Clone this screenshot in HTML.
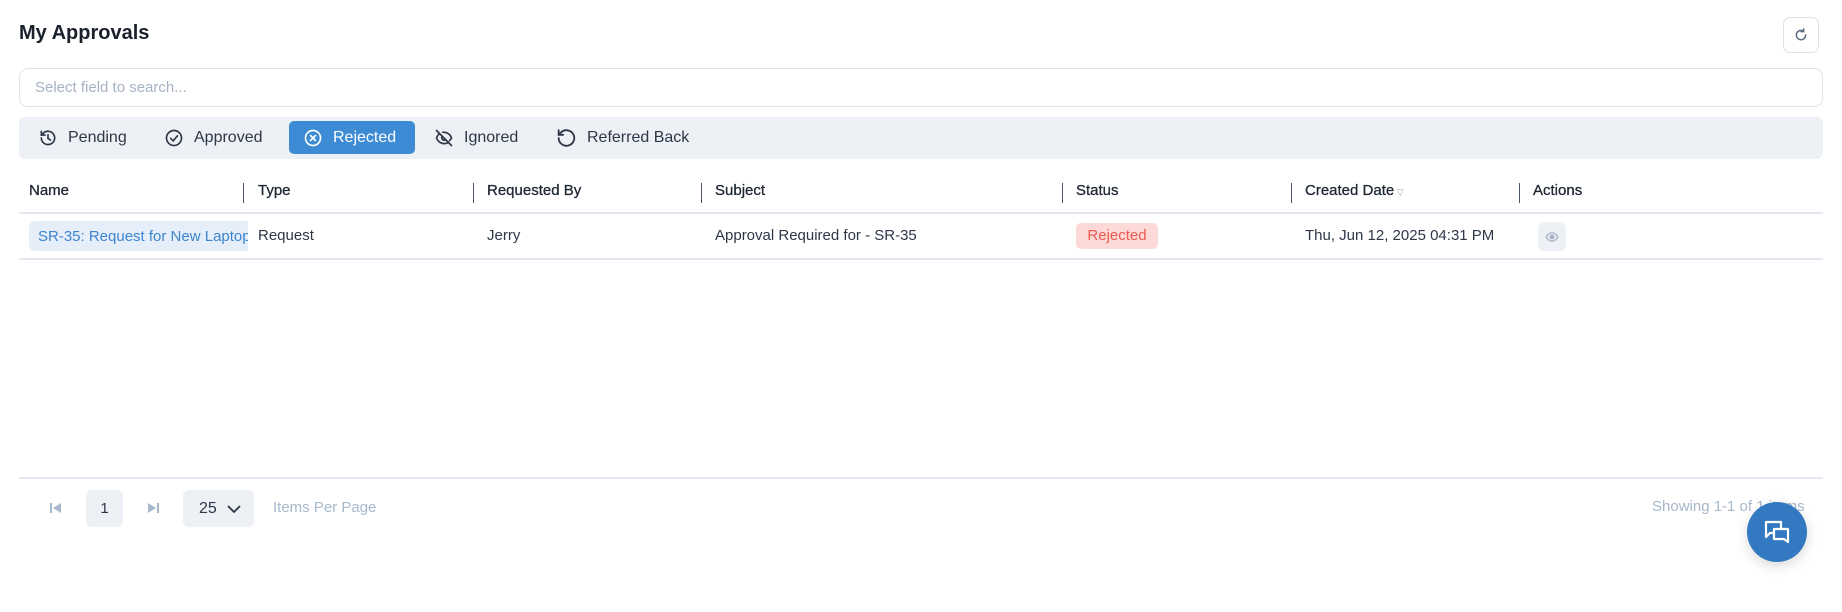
<!DOCTYPE html>
<html><head><meta charset="utf-8"><style>
*{box-sizing:border-box;margin:0;padding:0}
body{width:1842px;height:612px;background:#fff;font-family:"Liberation Sans",sans-serif;color:#2d3748;position:relative;overflow:hidden}
.a{position:absolute;white-space:nowrap}
.tab{position:absolute;top:121px;height:33px;display:flex;align-items:center;font-size:16px;color:#2d3748}
.tab svg{margin-right:10px}
.th{position:absolute;top:182px;font-size:15px;color:#1f2733;-webkit-text-stroke:0.3px #1f2733}
.sep{position:absolute;top:183px;width:1px;height:20px;background:#4a5568}
.td{position:absolute;top:227px;font-size:15px;color:#2d3748}
</style></head><body>
<div class="a" style="left:19px;top:22px;font-size:20px;font-weight:bold;color:#1a202c">My Approvals</div>
<div class="a" style="left:1783px;top:17px;width:36px;height:36px;border:1px solid #dde3ec;border-radius:7px;display:flex;align-items:center;justify-content:center">
<svg width="16" height="16" viewBox="0 0 24 24" fill="none" stroke="#5a6b80" stroke-width="2.2" stroke-linecap="round"><path d="M19 12a7 7 0 1 1-3-5.7"/><path d="M16 3v4h-4" /></svg></div>
<div class="a" style="left:19px;top:68px;width:1804px;height:39px;border:1px solid #dde3ec;border-radius:9px"></div>
<div class="a" style="left:35px;top:79px;font-size:15px;color:#a7b3c4">Select field to search...</div>
<div class="a" style="left:19px;top:117px;width:1804px;height:42px;background:#edf0f5;border-radius:6px"></div>
<div class="a" style="left:289px;top:121px;width:126px;height:33px;background:#3d8bd4;border-radius:5px"></div>
<div class="tab" style="left:38px"><svg width="20" height="20" viewBox="0 0 24 24" fill="none" stroke="#2d3748" stroke-width="2" stroke-linecap="round"><path d="M4 12a8 8 0 1 0 2.3-5.7L4 8.5"/><path d="M4 4v4.5h4.5"/><path d="M12 8v4.5l3 2"/></svg>Pending</div>
<div class="tab" style="left:164px"><svg width="20" height="20" viewBox="0 0 24 24" fill="none" stroke="#2d3748" stroke-width="2" stroke-linecap="round"><circle cx="12" cy="12" r="9"/><path d="M8 12.5l3 3 5-6"/></svg>Approved</div>
<div class="tab" style="left:303px;color:#fff"><svg width="20" height="20" viewBox="0 0 24 24" fill="none" stroke="#fff" stroke-width="2" stroke-linecap="round"><circle cx="12" cy="12" r="9"/><path d="M9 9l6 6M15 9l-6 6"/></svg>Rejected</div>
<div class="tab" style="left:434px"><svg width="20" height="20" viewBox="0 0 24 24" fill="none" stroke="#2d3748" stroke-width="2" stroke-linecap="round"><path d="M3 3l18 18"/><path d="M10.6 5.1A10 10 0 0 1 21 12a12 12 0 0 1-2.4 3.2M6.6 6.6A12 12 0 0 0 3 12a10 10 0 0 0 14.4 5.4"/><path d="M9.9 9.9a3 3 0 0 0 4.2 4.2"/></svg>Ignored</div>
<div class="tab" style="left:555px"><svg width="22" height="22" viewBox="0 0 24 24" fill="none" stroke="#2d3748" stroke-width="2" stroke-linecap="round"><path d="M4 12a8.5 8.5 0 1 0 2.5-6L4 8.5"/><path d="M4 3.5v5h5"/></svg>Referred Back</div>

<div class="th" style="left:29px">Name</div>
<div class="sep" style="left:243px"></div><div class="th" style="left:258px">Type</div>
<div class="sep" style="left:473px"></div><div class="th" style="left:487px">Requested By</div>
<div class="sep" style="left:701px"></div><div class="th" style="left:715px">Subject</div>
<div class="sep" style="left:1062px"></div><div class="th" style="left:1076px">Status</div>
<div class="sep" style="left:1291px"></div><div class="th" style="left:1305px">Created Date<span style="font-size:9px;color:#a0aec0;-webkit-text-stroke:0"> ▽</span></div>
<div class="sep" style="left:1519px"></div><div class="th" style="left:1533px">Actions</div>
<div class="a" style="left:19px;top:212px;width:1804px;height:2px;background:#e2e6ee"></div>

<div class="a" style="left:29px;top:221px;width:219px;height:30px;background:#e6eff9;border-radius:6px 0 0 6px;overflow:hidden;font-size:15px;color:#3d84cf;padding:7px 0 0 9px">SR-35: Request for New Laptop</div>
<div class="td" style="left:258px">Request</div>
<div class="td" style="left:487px">Jerry</div>
<div class="td" style="left:715px">Approval Required for - SR-35</div>
<div class="a" style="left:1076px;top:223px;width:82px;height:26px;background:#fdd9d7;border-radius:5px;font-size:15px;color:#ec5a50;text-align:center;line-height:26px">Rejected</div>
<div class="td" style="left:1305px">Thu, Jun 12, 2025 04:31 PM</div>
<div class="a" style="left:1538px;top:222px;width:28px;height:29px;background:#edf0f5;border-radius:7px;display:flex;align-items:center;justify-content:center"><svg width="14" height="14" viewBox="0 0 24 24" fill="none" stroke="#a7b3c4" stroke-width="2.2"><path d="M2 12s4-7 10-7 10 7 10 7-4 7-10 7S2 12 2 12z"/><circle cx="12" cy="12" r="3" fill="#a7b3c4"/></svg></div>
<div class="a" style="left:19px;top:258px;width:1804px;height:2px;background:#e2e6ee"></div>

<div class="a" style="left:19px;top:477px;width:1804px;height:2px;background:#e2e8f0"></div>
<svg class="a" style="left:50px;top:502px" width="13" height="12" viewBox="0 0 13 12"><rect x="0" y="1" width="2" height="10" fill="#a7b8cc"/><path d="M11 1L3 6l8 5z" fill="#a7b8cc"/></svg>
<div class="a" style="left:86px;top:490px;width:37px;height:37px;background:#edf0f5;border-radius:6px;text-align:center;line-height:37px;font-size:15px;color:#2d3748">1</div>
<svg class="a" style="left:146px;top:502px" width="13" height="12" viewBox="0 0 13 12"><path d="M2 1l8 5-8 5z" fill="#a7b8cc"/><rect x="11" y="1" width="2" height="10" fill="#a7b8cc"/></svg>
<div class="a" style="left:183px;top:490px;width:71px;height:37px;background:#edf0f5;border-radius:6px;font-size:16px;color:#2d3748;line-height:37px;padding-left:16px">25 <svg style="margin-left:6px;vertical-align:-1px" width="14" height="9" viewBox="0 0 14 9" fill="none" stroke="#2d3748" stroke-width="1.8"><path d="M1 1l6 6 6-6"/></svg></div>
<div class="a" style="left:273px;top:499px;font-size:15px;color:#a7b8cc">Items Per Page</div>
<div class="a" style="left:1652px;top:498px;font-size:15px;color:#a7b8cc">Showing 1-1 of 1 items</div>
<div class="a" style="left:1747px;top:502px;width:60px;height:60px;border-radius:50%;background:#3279c1;box-shadow:0 4px 12px rgba(0,0,0,.15);display:flex;align-items:center;justify-content:center">
<svg width="30" height="28" viewBox="0 0 30 28" fill="none" stroke="#fff" stroke-width="2.2" stroke-linejoin="round" stroke-linecap="round"><path d="M4 4h15v11H8l-4 4z"/><path d="M12 11h14v13l-4-3H12z" fill="#3279c1"/></svg></div>
</body></html>
